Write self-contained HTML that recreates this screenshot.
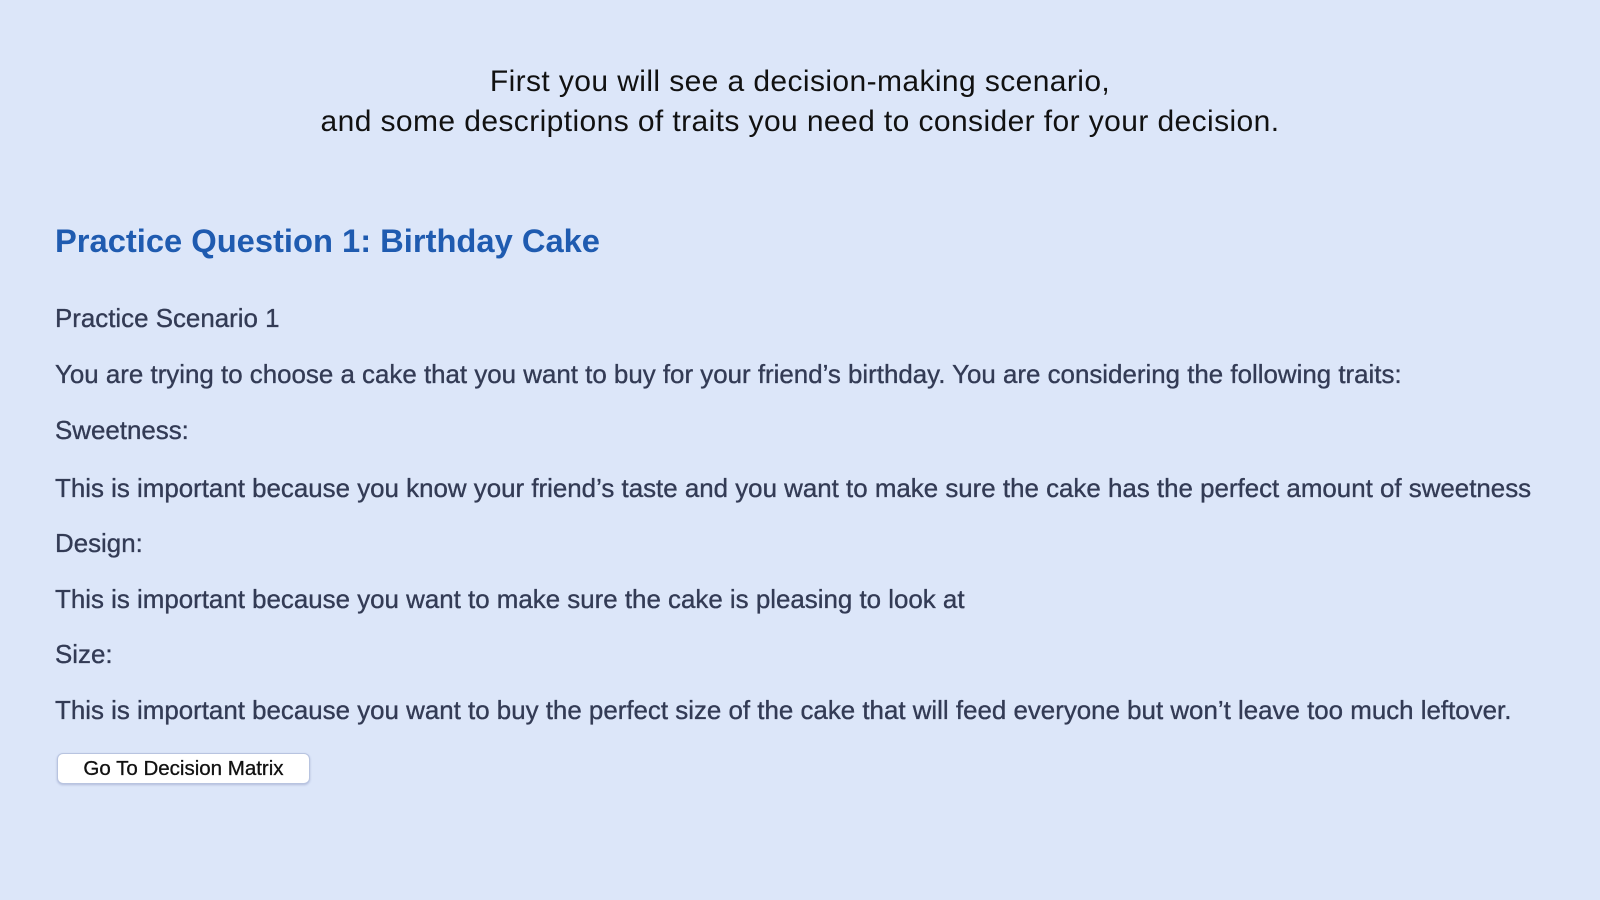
<!DOCTYPE html>
<html><head><meta charset="utf-8"><style>
html,body{margin:0;padding:0;}
body{width:1600px;height:900px;background:#dce6f9;position:relative;overflow:hidden;font-family:"Liberation Sans",Arial,sans-serif;}
.top{position:absolute;left:0;width:1600px;text-align:center;font-size:30px;color:#111;font-family:"Liberation Sans",sans-serif;letter-spacing:0.4px}
h1{position:absolute;left:55px;top:222px;margin:0;font-size:32.7px;font-weight:bold;color:#1f5bb0;}
.l{position:absolute;left:55px;font-size:25.9px;color:#333b55;white-space:nowrap;-webkit-text-stroke:0.35px #333b55}
.btn{position:absolute;left:57px;top:753px;width:253px;height:31px;background:#fff;border:1px solid #b8c4e0;border-radius:6px;box-sizing:border-box;font-size:20.5px;color:#111;text-align:center;line-height:29px;box-shadow:0 1px 2px rgba(80,90,150,.3);-webkit-text-stroke:0.3px #111}
</style></head><body>
<div class="top" style="top:65px">First you will see a decision-making scenario,</div>
<div class="top" style="top:105px">and some descriptions of traits you need to consider for your decision.</div>
<h1>Practice Question 1: Birthday Cake</h1>
<div class="l" style="top:305px">Practice Scenario 1</div>
<div class="l" style="top:361px">You are trying to choose a cake that you want to buy for your friend’s birthday. You are considering the following traits:</div>
<div class="l" style="top:417px">Sweetness:</div>
<div class="l" style="top:475px">This is important because you know your friend’s taste and you want to make sure the cake has the perfect amount of sweetness</div>
<div class="l" style="top:530px">Design:</div>
<div class="l" style="top:586px">This is important because you want to make sure the cake is pleasing to look at</div>
<div class="l" style="top:641px">Size:</div>
<div class="l" style="top:697px">This is important because you want to buy the perfect size of the cake that will feed everyone but won’t leave too much leftover.</div>
<div class="btn">Go To Decision Matrix</div>
</body></html>
